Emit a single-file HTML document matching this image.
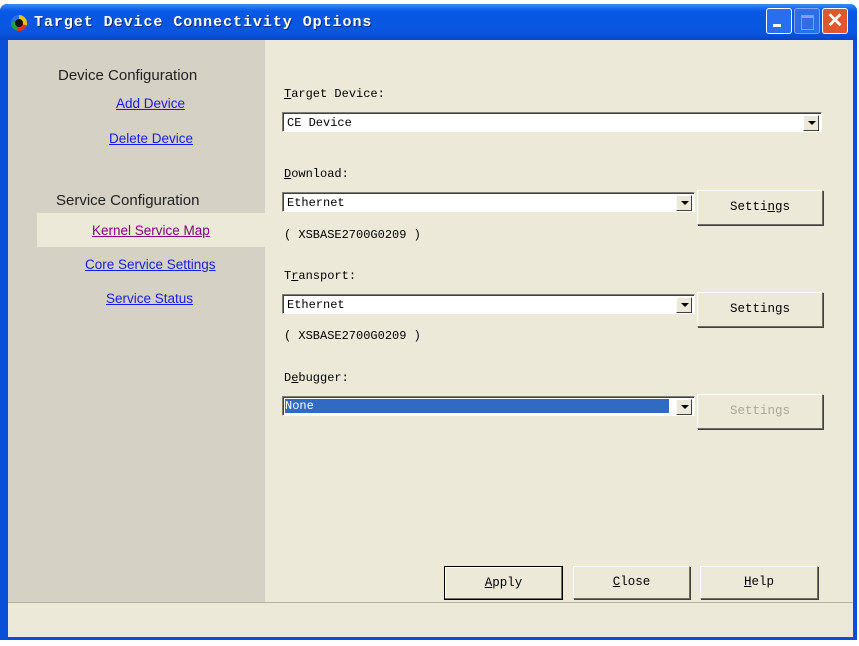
<!DOCTYPE html>
<html><head><style>
body{margin:0;width:859px;height:646px;background:#fff;position:relative;overflow:hidden;font-family:"Liberation Mono","Noto Sans CJK SC",monospace;}
.a{position:absolute}
.win{left:0;top:4px;width:857px;height:636px;background:#0a4fd8;border-radius:7px 7px 0 0}
.title{left:0;top:4px;width:857px;height:36px;background:linear-gradient(#3a8cf5,#0758e6 20%,#0a55df 80%,#0845c8);border-radius:7px 7px 0 0}
.tt{left:34px;top:14px;color:#fff;font:bold 15px "Liberation Mono",monospace;letter-spacing:0.95px;text-shadow:1px 1px #0a2a80}
.left{left:8px;top:40px;width:257px;height:562px;background:#d5d1c5}
.right{left:265px;top:40px;width:588px;height:562px;background:#ece9d8}
.status{left:8px;top:602px;width:845px;height:34px;background:#ece9d8;border-top:1px solid #b5b2a4}
.sans{font-family:"Liberation Sans",sans-serif;font-size:15px}
.lnk{color:#1a1ae6;text-decoration:underline;font-family:"Liberation Sans",sans-serif;font-size:13.5px}
.lbl{font-size:12px;color:#000}
.combo{background:#fff;border:1px solid;border-color:#7f7d74 #fff #fff #7f7d74;box-shadow:inset 1px 1px #404040;height:20px;font-size:12px;line-height:20px;padding-left:4px;box-sizing:border-box}
.dd{position:absolute;right:2px;top:2px;width:16px;height:16px;background:#ece9d8;border:1px solid;border-color:#fff #404040 #404040 #fff;box-sizing:border-box}
.dd:after{content:"";position:absolute;left:4px;top:5px;border-left:4px solid transparent;border-right:4px solid transparent;border-top:4px solid #000}
.btn{background:#ece9d8;border:1px solid;border-color:#fff #716f64 #716f64 #fff;box-shadow:1px 1px #404040;box-sizing:border-box;font-size:12.5px;text-align:center}
</style></head><body>
<div class="a win"></div>
<div class="a title"></div>
<div class="a" style="left:11px;top:15px;width:16px;height:16px;border-radius:50%;background:conic-gradient(#e8c020 0 30%,#e83020 30% 55%,#20a040 55% 80%,#3070e0 80%)"></div>
<div class="a" style="left:15px;top:19px;width:8px;height:8px;border-radius:50%;background:#111"></div>
<div class="a tt">Target Device Connectivity Options</div>
<div class="a" style="left:766px;top:8px;width:26px;height:26px;border:1px solid #fff;border-radius:3px;background:#2a6ef0;box-sizing:border-box"><div class="a" style="left:6px;top:15px;width:8px;height:3px;background:#fff"></div></div>
<div class="a" style="left:794px;top:8px;width:26px;height:26px;border:1px solid #9ab8f0;border-radius:3px;background:#3a72e8;box-sizing:border-box;opacity:.8"><div class="a" style="left:6px;top:6px;width:11px;height:11px;border:1px solid #9ab8f0;border-top-width:3px"></div></div>
<div class="a" style="left:822px;top:8px;width:26px;height:26px;border:1px solid #fff;border-radius:3px;background:#e0572e;box-sizing:border-box;color:#fff;font:bold 20px 'Liberation Sans';text-align:center;line-height:24px">✕</div>
<div class="a left"></div>
<div class="a right"></div>
<div class="a status"></div>
<div class="a" style="left:37px;top:213px;width:228px;height:34px;background:#ece9d8"></div>
<div class="a sans" style="left:58px;top:67px;color:#222">Device Configuration</div>
<div class="a lnk" style="left:116px;top:96px">Add Device</div>
<div class="a lnk" style="left:109px;top:131px">Delete Device</div>
<div class="a sans" style="left:56px;top:192px;color:#222">Service Configuration</div>
<div class="a lnk" style="left:92px;top:223px;color:#800080">Kernel Service Map</div>
<div class="a lnk" style="left:85px;top:257px">Core Service Settings</div>
<div class="a lnk" style="left:106px;top:291px">Service Status</div>

<div class="a lbl" style="left:284px;top:87px"><u>T</u>arget Device:</div>
<div class="a combo" style="left:282px;top:112px;width:540px">CE Device<div class="dd"></div></div>

<div class="a lbl" style="left:284px;top:167px"><u>D</u>ownload:</div>
<div class="a combo" style="left:282px;top:192px;width:413px">Ethernet<div class="dd"></div></div>
<div class="a btn" style="left:697px;top:190px;width:126px;height:35px;line-height:33px">Setti<u>n</u>gs</div>
<div class="a lbl" style="left:284px;top:228px">( XSBASE2700G0209 )</div>

<div class="a lbl" style="left:284px;top:269px">T<u>r</u>ansport:</div>
<div class="a combo" style="left:282px;top:294px;width:413px">Ethernet<div class="dd"></div></div>
<div class="a btn" style="left:697px;top:292px;width:126px;height:35px;line-height:33px">Settings</div>
<div class="a lbl" style="left:284px;top:329px">( XSBASE2700G0209 )</div>

<div class="a lbl" style="left:284px;top:371px">D<u>e</u>bugger:</div>
<div class="a combo" style="left:282px;top:396px;width:413px;padding:2px"><div style="background:#316ac5;color:#fff;height:14px;line-height:14px;width:384px;outline:1px dotted #fff;font-size:12px">None</div><div class="dd"></div></div>
<div class="a btn" style="left:697px;top:394px;width:126px;height:35px;line-height:33px;color:#aca899">Settin<u>g</u>s</div>

<div class="a btn" style="left:444px;top:566px;width:119px;height:34px;line-height:32px;border:1px solid #000;box-shadow:inset -1px -1px #716f64,inset 1px 1px #fff"><u>A</u>pply</div>
<div class="a btn" style="left:573px;top:566px;width:117px;height:33px;line-height:31px"><u>C</u>lose</div>
<div class="a btn" style="left:700px;top:566px;width:118px;height:33px;line-height:31px"><u>H</u>elp</div>
</body></html>
